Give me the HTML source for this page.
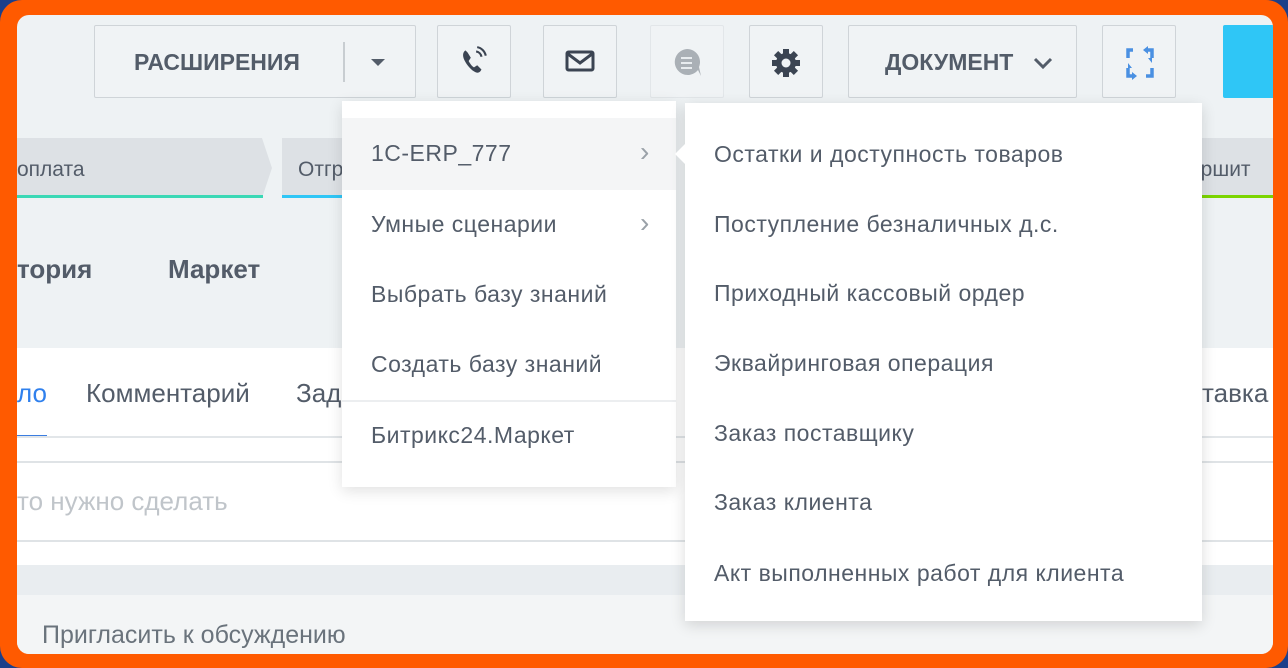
<!DOCTYPE html>
<html><head><meta charset="utf-8"><style>
*{margin:0;padding:0;box-sizing:border-box}
body{width:1288px;height:668px;background:#1c3f8a;overflow:hidden;font-family:"Liberation Sans","DejaVu Sans",sans-serif;position:relative}
.frame{position:absolute;left:0;top:0;width:1288px;height:668px;background:#ff5a00;border-radius:22px}
.in{position:absolute;left:17px;top:15px;width:1256px;height:639px;background:#eef2f4;border-radius:12px;overflow:hidden}
.a{position:absolute}
.btn{position:absolute;top:10px;height:73px;border:1.5px solid #cfd4d8;border-radius:2px;background:#f0f3f5}
.t{position:absolute;white-space:nowrap}
.mi{position:absolute;font-size:23px;letter-spacing:0.5px;color:#535c69;white-space:nowrap}
.ch{position:absolute;font-size:28px;color:#9aa1a8}
</style></head><body>
<div class="frame"></div>
<div class="in">
 <div class="btn" style="left:77px;width:322px"><div class="t" style="left:39px;top:23px;font-size:23px;font-weight:bold;color:#535c69">РАСШИРЕНИЯ</div><div class="a" style="left:248px;top:16px;width:1.5px;height:40px;background:#c8cdd1"></div><div class="a" style="left:276px;top:33px;border-left:7px solid transparent;border-right:7px solid transparent;border-top:7px solid #535c69"></div></div>
 <div class="btn" style="left:420px;width:74px"><svg class="a" style="left:20px;top:19px" width="32" height="32" viewBox="0 0 30 30"><path d="M7 5c-3 2-3 6 0 11s7 9 11 10c2 0 3-1 4-3l-4-4-3 2c-2-1-4-4-5-6l2-3-3-5z" fill="#3b4452"/><path d="M17 6a6 6 0 0 1 5 5M18 2a10 10 0 0 1 8 8" stroke="#3b4452" stroke-width="2" fill="none"/></svg></div>
 <div class="btn" style="left:526px;width:74px"><svg class="a" style="left:21px;top:24px" width="30" height="22" viewBox="0 0 30 22"><rect x="2" y="2" width="26" height="18" rx="1.5" fill="none" stroke="#3b4452" stroke-width="3"/><path d="M3 4l12 9 12-9" fill="none" stroke="#3b4452" stroke-width="3"/></svg></div>
 <div class="btn" style="left:633px;width:74px;border-color:#e2e6e9"><svg class="a" style="left:20px;top:21px" width="32" height="32" viewBox="0 0 32 32"><path d="M16 2a13 13 0 1 0 11 21l3 6-2-9a13 13 0 0 0-12-18z" fill="#aab0b6"/><path d="M10 11h11M10 16h11M10 21h11" stroke="#e8ecef" stroke-width="2"/></svg></div>
 <div class="btn" style="left:732px;width:74px"><svg class="a" style="left:20px;top:21px" width="32" height="32" viewBox="0 0 32 32"><g fill="#3b4452"><circle cx="16" cy="16" r="10"/><rect x="13" y="2" width="6" height="28"/><rect x="2" y="13" width="28" height="6"/><rect x="13" y="2" width="6" height="28" transform="rotate(45 16 16)"/><rect x="13" y="2" width="6" height="28" transform="rotate(-45 16 16)"/></g><circle cx="16" cy="16" r="4.5" fill="#f0f3f5"/></svg></div>
 <div class="btn" style="left:831px;width:229px"><div class="t" style="left:36px;top:23px;font-size:23px;font-weight:bold;color:#535c69">ДОКУМЕНТ</div><svg class="a" style="left:183px;top:30px" width="22" height="14" viewBox="0 0 22 14"><path d="M3 3l8 8 8-8" stroke="#535c69" stroke-width="3" fill="none"/></svg></div>
 <div class="btn" style="left:1085px;width:74px"><svg class="a" style="left:18px;top:18px" width="38" height="38" viewBox="0 0 38 38"><path d="M12 6H7v8M7 24v8h6M25 32h6v-8M31 14V6h-6" stroke="#4a90e2" stroke-width="3.5" fill="none"/><path d="M22 6l5-4v8zM16 32l-5 4v-8zM31 14l-4 0 4 5zM7 24l4 0-4-5z" fill="#4a90e2"/></svg></div>
 <div class="a" style="left:1206px;top:10px;width:60px;height:73px;background:#2fc6f6;border-radius:2px"></div>
 <div class="a" style="left:0;top:123px;width:260px;height:60px;background:#dde1e5;clip-path:polygon(0 0,245px 0,255px 30px,245px 60px,0 60px)"></div>
 <div class="a" style="left:0;top:180px;width:246px;height:3px;background:#3ad8b5"></div>
 <div class="t" style="left:0;top:143px;font-size:21px;color:#535c69">оплата</div>
 <div class="a" style="left:265px;top:123px;width:80px;height:60px;background:#dde1e5"></div>
 <div class="a" style="left:265px;top:180px;width:80px;height:3px;background:#2fc6f6"></div>
 <div class="t" style="left:281px;top:143px;font-size:21px;color:#535c69">Отгр</div>
 <div class="a" style="left:1183px;top:123px;width:80px;height:60px;background:#dde1e5"></div>
 <div class="a" style="left:1183px;top:180px;width:80px;height:3px;background:#7bd500"></div>
 <div class="t" style="left:1172px;top:143px;font-size:21px;color:#535c69">ершит</div>
 <div class="t" style="left:0;top:239px;font-size:26px;font-weight:bold;color:#535c69">тория</div>
 <div class="t" style="left:151px;top:239px;font-size:26px;font-weight:bold;color:#535c69">Маркет</div>
 <div class="a" style="left:0;top:333px;width:1256px;height:217px;background:#fff"></div>
 <div class="t" style="left:0;top:363px;font-size:26px;color:#2f80ed">ло</div>
 <div class="a" style="left:0;top:420px;width:30px;height:3px;background:#3b7de0"></div>
 <div class="t" style="left:69px;top:363px;font-size:26px;color:#535c69">Комментарий</div>
 <div class="t" style="left:279px;top:363px;font-size:26px;color:#535c69">Зад</div>
 <div class="t" style="left:1172px;top:363px;font-size:26px;color:#535c69">ставка</div>
 <div class="a" style="left:0;top:421px;width:1256px;height:1.5px;background:#e2e6e9"></div>
 <div class="a" style="left:0;top:446px;width:1256px;height:1.5px;background:#dfe3e6"></div>
 <div class="t" style="left:0;top:471px;font-size:26px;color:#c0c5ca">то нужно сделать</div>
 <div class="a" style="left:0;top:525px;width:1256px;height:1.5px;background:#dfe3e6"></div>
 <div class="a" style="left:0;top:550px;width:1256px;height:30px;background:#e9edf0"></div>
 <div class="a" style="left:0;top:580px;width:1256px;height:60px;background:#f3f5f6"></div>
 <div class="t" style="left:25px;top:606px;font-size:25px;color:#6a737c">Пригласить к обсуждению</div>
 <div class="a" style="left:325px;top:86px;width:334px;height:386px;background:#fff;box-shadow:0 4px 14px rgba(0,0,0,.12)">
  <div class="a" style="left:0;top:17px;width:334px;height:72px;background:#f4f5f6"></div>
  <div class="mi" style="left:29px;top:39px">1C-ERP_777</div>
  <div class="ch" style="left:298px;top:35px">›</div>
  <div class="mi" style="left:29px;top:110px">Умные сценарии</div>
  <div class="ch" style="left:298px;top:106px">›</div>
  <div class="mi" style="left:29px;top:180px">Выбрать базу знаний</div>
  <div class="mi" style="left:29px;top:250px">Создать базу знаний</div>
  <div class="a" style="left:0;top:299px;width:334px;height:1.5px;background:#eceef0"></div>
  <div class="mi" style="left:29px;top:321px">Битрикс24.Маркет</div>
 </div>
 <div class="a" style="left:668px;top:88px;width:517px;height:518px;background:#fff;box-shadow:0 4px 14px rgba(0,0,0,.14)">
  <div class="a" style="left:-10px;top:40px;width:0;height:0;border-top:11px solid transparent;border-bottom:11px solid transparent;border-right:11px solid #fff"></div>
  <div class="mi" style="left:29px;top:38px">Остатки и доступность товаров</div>
  <div class="mi" style="left:29px;top:108px">Поступление безналичных д.с.</div>
  <div class="mi" style="left:29px;top:177px">Приходный кассовый ордер</div>
  <div class="mi" style="left:29px;top:247px">Эквайринговая операция</div>
  <div class="mi" style="left:29px;top:317px">Заказ поставщику</div>
  <div class="mi" style="left:29px;top:386px">Заказ клиента</div>
  <div class="mi" style="left:29px;top:457px">Акт выполненных работ для клиента</div>
 </div>
</div>
</body></html>
